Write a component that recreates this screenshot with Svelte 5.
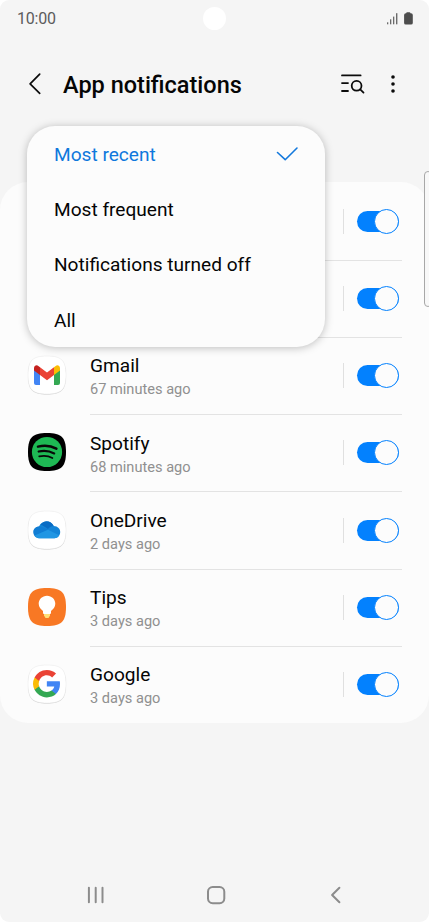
<script>
  const options = ['Most recent', 'Most frequent', 'Notifications turned off', 'All'];
  const apps = [
    { name: '', time: '', icon: '' },
    { name: '', time: '', icon: '' },
    { name: 'Gmail', time: '67 minutes ago', icon: 'gmail' },
    { name: 'Spotify', time: '68 minutes ago', icon: 'spotify' },
    { name: 'OneDrive', time: '2 days ago', icon: 'onedrive' },
    { name: 'Tips', time: '3 days ago', icon: 'tips' },
    { name: 'Google', time: '3 days ago', icon: 'google' }
  ];
  let selected = $state(0);
  let enabled = $state(apps.map(() => true));
</script>

<div class="phone">
  <div class="status">
    <span class="clock">10:00</span>
    <span class="camera"></span>
    <svg class="indicators" width="28" height="14" viewBox="0 0 28 14">
      <g fill="#6b6b6b">
        <rect x="1" y="10.3" width="1.3" height="2" />
        <rect x="4" y="7.3" width="1.3" height="5" />
        <rect x="7" y="4.6" width="1.3" height="7.7" />
        <rect x="10" y="1.2" width="1.4" height="11.1" />
      </g>
      <path d="M20.200 1.200q0-.9.9-.9h2.400q.9 0 .9.9h.6q1.800 0 1.800 1.800v7.900q0 1.700-1.800 1.700h-5.200q-1.700 0-1.700-1.700V3q0-1.800 1.700-1.800z" fill="#4d4d4d" />
    </svg>
  </div>

  <header>
    <button class="back" aria-label="Back">
      <svg width="14" height="24" viewBox="0 0 14 24"><path d="M11.700 2.100 2.100 11.900l9.600 9.500" fill="none" stroke="#0b0b0b" stroke-width="1.700" stroke-linecap="round" stroke-linejoin="round" /></svg>
    </button>
    <h1>App notifications</h1>
    <button class="search" aria-label="Search list">
      <svg width="26" height="22" viewBox="0 0 26 22" fill="none" stroke="#0b0b0b" stroke-width="1.800" stroke-linecap="round">
        <path d="M2 2.400h18.600M2 10.100h6M2 18h6" />
        <circle cx="16.600" cy="12.800" r="4.900" /><path d="m20.200 16.400 3.300 3.200" />
      </svg>
    </button>
    <button class="more" aria-label="More options">
      <svg width="6" height="20" viewBox="0 0 6 20" fill="#0b0b0b"><circle cx="3" cy="3" r="1.800" /><circle cx="3" cy="10" r="1.800" /><circle cx="3" cy="17" r="1.800" /></svg>
    </button>
  </header>

  <main>
    {#each apps as app, i}
      <section class="row">
        <div class="icon">
          {#if app.icon}
            <svg width="42" height="42" viewBox="0 0 42 42">
              {#if app.icon !== 'spotify' && app.icon !== 'tips'}
                <path d="M21 2c14.500 0 19 4.500 19 19s-4.500 19-19 19-19-4.500-19-19S6.500 2 21 2z" fill="#c8c8c8" transform="translate(0 .6)" />
              {/if}
              <path d="M21 2c14.500 0 19 4.500 19 19s-4.500 19-19 19-19-4.500-19-19S6.500 2 21 2z"
                fill={app.icon === 'spotify' ? '#000' : app.icon === 'tips' ? '#f87824' : '#fff'}
                stroke={app.icon === 'spotify' || app.icon === 'tips' ? 'none' : '#e8e8e8'} stroke-width=".5" />
              {#if app.icon === 'gmail'}
                <path d="M8 14.500l6 4.400v12.100H10q-2 0-2-2z" fill="#4285f4" />
                <path d="M28 18.900l6-4.400V29q0 2-2 2h-4z" fill="#34a853" />
                <path d="M28 13.200l1.700-1.300c1.800-1.400 4.300 0 4.300 2.300v2.400l-6 4.500z" fill="#fbbc04" />
                <path d="M14 13.200l7 5.200 7-5.200v7.900l-7 5.200-7-5.200z" fill="#ea4335" />
                <path d="M8 14.200c0-2.300 2.500-3.700 4.300-2.300l1.700 1.300v7.900l-6-4.500z" fill="#c5221f" />
              {:else if app.icon === 'spotify'}
                <circle cx="21" cy="21" r="15.100" fill="#1eb954" />
                <g fill="none" stroke="#080808" stroke-linecap="round">
                  <path d="M12 15.600c6.500-1.600 13-.9 18.400 2" stroke-width="2.500" />
                  <path d="M12.600 20.600c5.600-1.400 11-.6 15.600 1.900" stroke-width="2.100" />
                  <path d="M13.200 25.400c4.900-1.100 9.400-.5 13.200 1.600" stroke-width="1.700" />
                </g>
              {:else if app.icon === 'onedrive'}
                <path d="M13 17.500c2.500-6 11.500-7 14.700-.4 4.200.1 6.500 3 6.500 5.900 0 3.600-2.700 6.200-5.800 6.200H13.600c-4 0-6.200-3-6.200-6.300 0-3 2.300-5.200 5.600-5.400z" fill="#1484d7" />
                <path d="M14.600 15.700c3.200-4.900 10.400-5 13.100 1.400-2.600.1-4.200 1.400-5.700 3-2.200-1.800-4.600-3.400-7.400-4.400z" fill="#0a6cc4" />
                <path d="M13 17.500c2.300 0 4.100.6 9 3.300L8.700 26.500c-2.800-4.300 0-8.700 4.300-9z" fill="#117dd4" />
                <path d="M22 20.700l11.200 5.600c-1 1.800-2.700 2.900-4.800 2.900H13.600c-2.200 0-3.900-1.200-4.900-2.700z" fill="#2196e3" />
              {:else if app.icon === 'tips'}
                <path d="M18 27h6v2.500L22.500 32h-3L18 29.500z" fill="#ffe078" />
                <path d="M21 9.700c4.700 0 8.300 3.600 8.300 8.100 0 3.500-2.100 5.500-4.300 7.200V27q0 1-1 1h-6q-1 0-1-1v-2c-2.200-1.700-4.300-3.700-4.300-7.200 0-4.500 3.600-8.100 8.300-8.100z" fill="#fff" />
              {:else}
                <g transform="translate(7.100 6.900) scale(1.145)">
                  <path d="M23.490 12.270c0-.8-.07-1.550-.2-2.270H12v4.510h6.470c-.29 1.480-1.140 2.730-2.400 3.580v3h3.860c2.260-2.090 3.560-5.170 3.560-8.820z" fill="#4285f4" />
                  <path d="M12 24c3.240 0 5.950-1.080 7.930-2.910l-3.860-3c-1.080.72-2.450 1.160-4.070 1.160-3.130 0-5.780-2.110-6.730-4.960H1.290v3.090C3.260 21.300 7.310 24 12 24z" fill="#34a853" />
                  <path d="M5.270 14.290A7.200 7.200 0 0 1 5.270 9.710V6.620H1.290a12 12 0 0 0 0 10.760z" fill="#fbbc05" />
                  <path d="M12 4.750c1.770 0 3.350.61 4.600 1.800l3.420-3.420C17.950 1.190 15.240 0 12 0 7.310 0 3.260 2.700 1.290 6.620l3.980 3.090C6.220 6.860 8.870 4.750 12 4.750z" fill="#ea4335" />
                </g>
              {/if}
            </svg>
          {/if}
        </div>
        <div class="body">
          <div class="label">
            <div class="name">{app.name}</div>
            <div class="time">{app.time}</div>
          </div>
          <span class="rule"></span>
          <button class="toggle" class:off={!enabled[i]} aria-label={`Notifications ${i + 1}`} onclick={() => (enabled[i] = !enabled[i])}>
            <span class="knob"></span>
          </button>
        </div>
      </section>
    {/each}
  </main>

  <nav>
    <svg width="18" height="18" viewBox="0 0 18 18"><path d="M1.900 1.700v14.600M8.700 1.700v14.600M15.500 1.700v14.600" stroke="#8c8c8c" stroke-width="2" stroke-linecap="round" /></svg>
    <svg class="home" width="20" height="20" viewBox="0 0 20 20"><rect x="2" y="2" width="16.300" height="16.200" rx="4.700" fill="none" stroke="#8c8c8c" stroke-width="2" /></svg>
    <svg width="12" height="18" viewBox="0 0 12 18"><path d="M9.400 1.700 2.100 9l7.300 7.300" fill="none" stroke="#8c8c8c" stroke-width="2" stroke-linecap="round" stroke-linejoin="round" /></svg>
  </nav>

  <div class="menu">
    {#each options as option, i}
      <button class="option" class:selected={selected === i} onclick={() => (selected = i)}>
        <span>{option}</span>
        {#if selected === i}
          <svg width="24" height="16" viewBox="0 0 24 16"><path d="M2.500 6.500 10.200 13.700 22 2" fill="none" stroke="#1479dc" stroke-width="1.600" stroke-linecap="round" stroke-linejoin="round" /></svg>
        {/if}
      </button>
    {/each}
  </div>
  <span class="edge"></span>
</div>

<style>
  :global(body) { background: #fff; }
  .phone {
    position: relative;
    width: 429px;
    height: 922px;
    overflow: hidden;
    display: flex;
    flex-direction: column;
    background: #f5f5f5;
    border-radius: 9px;
    font-family: Roboto, "Liberation Sans", sans-serif;
    color: #050505;
  }
  button { border: 0; padding: 0; margin: 0; background: none; font: inherit; color: inherit; display: block; text-align: left; }
  svg { display: block; flex: none; }
  .status { height: 37px; display: grid; grid-template-columns: 1fr 24px 1fr; align-items: center; padding: 0 15px 0 17px; }
  .clock { font-size: 16px; line-height: 20px; color: #5c5c5c; letter-spacing: -0.2px; }
  .camera { width: 23.500px; height: 23.500px; border-radius: 50%; background: #fff; margin-left: -1px; }
  .indicators { justify-self: end; }
  header { height: 94px; display: flex; align-items: center; padding: 0 33px 0 28px; }
  .back { width: 35px; }
  h1 { margin: 0; padding-top: 2px; flex: 1; font-size: 23.500px; line-height: 30px; font-weight: 500; white-space: nowrap; }
  .search { width: 50px; }
  main { margin-top: 51.400px; background: #fcfcfc; border-radius: 28px; }
  .row { height: 77.250px; display: flex; padding-right: 27px; }
  .icon { width: 90px; padding-left: 26px; box-sizing: border-box; display: flex; align-items: center; }
  .icon svg { margin-top: -1px; }
  .body { flex: 1; display: flex; align-items: center; border-bottom: 1px solid #e3e3e3; box-sizing: border-box; margin-bottom: -1px; }
  .row:last-child .body { border-bottom-color: transparent; }
  .label { flex: 1; padding-top: 2.800px; }
  .name { font-size: 19.100px; line-height: 24px; }
  .time { font-size: 14.600px; line-height: 20px; color: #909090; margin-top: 1px; }
  .rule { width: 1px; height: 25px; background: #e0e0e0; }
  .toggle { position: relative; width: 42px; height: 21px; border-radius: 11px; background: #0381fe; margin: 0 3px 0 13px; }
  .toggle.off { background: #aaa; }
  .knob { position: absolute; right: 0; top: -2px; width: 25px; height: 25px; box-sizing: border-box; border: 1px solid #0381fe; border-radius: 50%; background: #fcfcfc; }
  .off .knob { right: auto; left: 0; border-color: #aaa; }
  nav { margin-top: auto; height: 54px; display: flex; align-items: center; justify-content: space-between; padding: 0 87px 0 87px; }
  .home { margin: 0 4px 0 0; }
  .menu { position: absolute; left: 27px; top: 126px; width: 298px; height: 221px; border-radius: 28px; background: #fcfcfc; box-shadow: 0 1px 8px rgba(0, 0, 0, 0.25); }
  .option { width: 100%; height: 55.300px; display: flex; align-items: center; justify-content: space-between; padding: 0 26px 0 27px; font-size: 19.100px; line-height: 24px; }
  .option span { padding-top: 2px; }
  .option.selected { color: #0f78dc; }
  .edge { position: absolute; left: 424px; top: 171px; width: 8px; height: 136px; box-sizing: border-box; border: 1px solid #a8a8a8; border-radius: 4px; background: #f8f8f8; }
</style>
